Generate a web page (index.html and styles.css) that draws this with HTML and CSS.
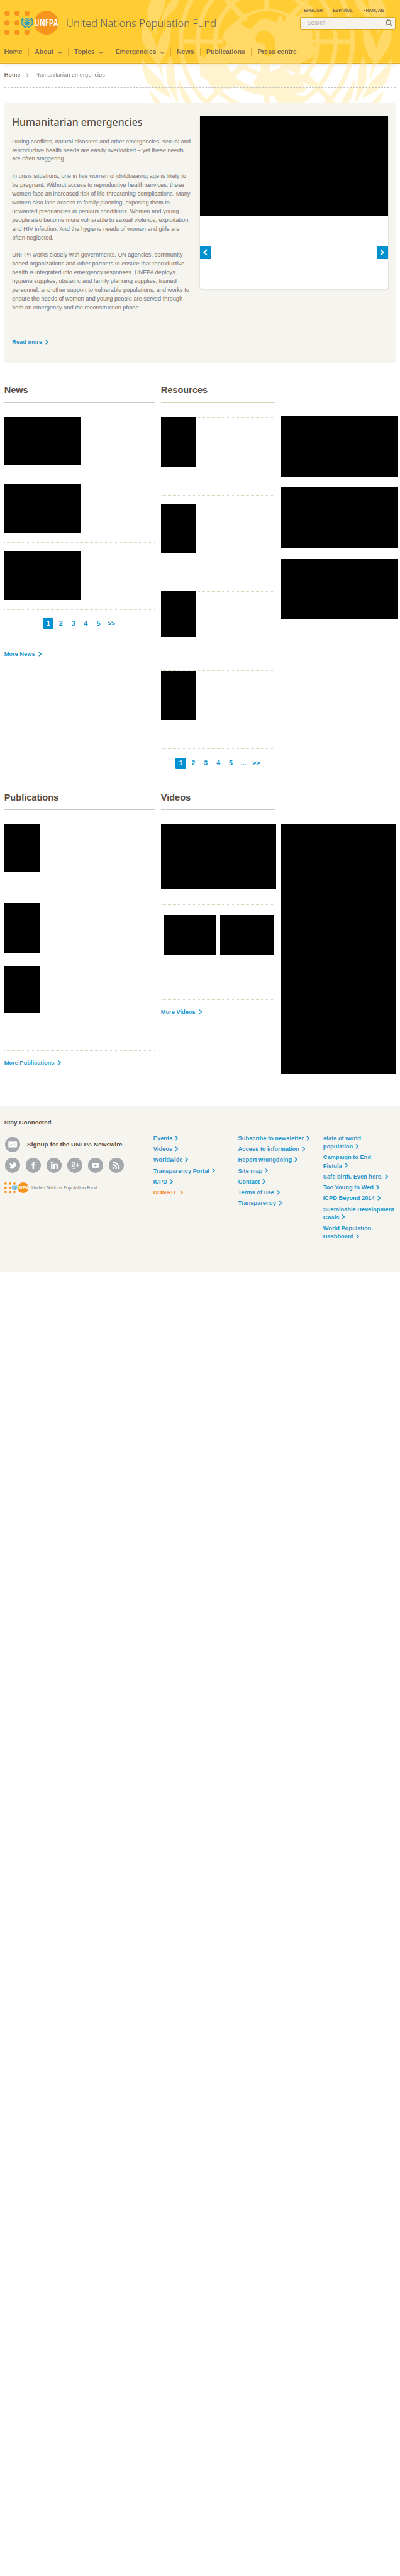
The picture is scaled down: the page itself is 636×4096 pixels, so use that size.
FILE: index.html
```html
<!DOCTYPE html>
<html lang="en">
<head>
<meta charset="utf-8">
<title>Humanitarian emergencies | UNFPA</title>
<link rel="stylesheet" href="styles.css">
</head>
<body>
<svg class="defs" aria-hidden="true">
  <symbol id="chev" viewBox="0 0 8 12"><path d="M1 1l5.500 5L1 11" fill="none" stroke="currentColor" stroke-width="2.200"/></symbol>
  <symbol id="chev-down" viewBox="0 0 10 7"><path d="M1 1l4 4 4-4" fill="none" stroke="currentColor" stroke-width="2"/></symbol>
  <g id="logo-art">
    <g fill="#f7941e">
      <circle cx="6.300" cy="6.300" r="6.400"/><circle cx="30.300" cy="6.300" r="6.400"/><circle cx="54.300" cy="6.300" r="6.400"/>
      <circle cx="6.300" cy="29" r="6.400"/><circle cx="30.300" cy="29" r="6.400"/>
      <circle cx="6.300" cy="51.700" r="6.400"/><circle cx="30.300" cy="51.700" r="6.400"/><circle cx="54.300" cy="51.700" r="6.400"/>
      <circle cx="100.700" cy="29" r="28.800"/>
    </g>
    <g fill="none" stroke="#1b98c9">
      <path d="M45 18q-5 6-3 13q2 7 11 9M64 18q5 6 3 13q-2 7-11 9" stroke-width="3.200" stroke-dasharray="3 .7"/>
      <circle cx="54.500" cy="28" r="10.300" stroke-width="1"/>
      <circle cx="54.500" cy="28" r="6.500" stroke-width="1"/>
      <path d="M44 28h21M54.500 17.500v21M47 20.600l15 15M62 20.600l-15 15" stroke-width=".8"/>
      <path d="M50 24l5 2 4-3M50 31l4-1 1 4M58 27l1 4" stroke-width="3"/>
    </g>
  </g>
  <g id="laurel">
    <path d="M363 0Q349 25 355 50L375 84Q374 70 383 45Q396 20 397 0z"/>
    <path d="M388 44Q393 20 412 0H430Q426 18 412 30Q397 44 390 60z"/>
    <path d="M347 49Q338 70 341 95Q347 120 373 148Q385 165 391 195Q392 160 376 128Q377 100 360 75z"/>
    <path d="M410 52Q388 75 376 115Q373 135 381 152Q400 133 406 105Q411 80 410 52z"/>
    <path d="M340 136Q339 170 353 197Q375 220 412 236Q400 205 372 178Q350 160 340 136z"/>
    <path d="M408 133Q394 165 402 200Q410 225 428 247Q424 220 421 190Q421 160 408 133z"/>
    <path d="M360 216Q361 235 372 247H388Q375 235 360 216z"/>
    <path d="M427 190Q428 225 445 247H461Q452 225 427 190z"/>
  </g>
</svg>

<div class="page">
  <svg class="emblem" viewBox="0 0 960 247" aria-hidden="true">
    <g class="emblem-ink">
      <use href="#laurel"/>
      <use href="#laurel" transform="translate(1280 0) scale(-1 1)"/>
      <path fill-rule="evenodd" d="M428 99.500a212 212 0 1 0 424 0a212 212 0 1 0-424 0zM439 99.500a201 201 0 1 0 402 0a201 201 0 1 0-402 0z"/>
      <path fill-rule="evenodd" d="M469 99.500a171 171 0 1 0 342 0a171 171 0 1 0-342 0zM480 99.500a160 160 0 1 0 320 0a160 160 0 1 0-320 0z"/>
      <path fill-rule="evenodd" d="M511 99.500a129 129 0 1 0 258 0a129 129 0 1 0-258 0zM522 99.500a118 118 0 1 0 236 0a118 118 0 1 0-236 0z"/>
      <path d="M439 94h41v11h-41zM480 94h56v11h-56zM745 94h96v11h-96zM634 0h12v26h-12zM634 220h12v27h-12z"/>
      <path d="M536 0h16l35 35 8 12-8 3-12-8zM744 0h-16l-35 35-8 12 8 3 12-8zM582 152l8 8-58 58-29 29h-16l36-37zM728 182l8-8 57 57 14 16h-18z"/>
      <path fill-rule="evenodd" d="M534 90L540 73 556 60 568 50C600 17 665 10 704 41L720 36 738 8 752 18 744 34 762 45 742 62 752 84 745 98 770 128 755 126 748 140 722 150 720 175 735 188 748 190 752 208 738 205 722 192 735 213 728 222 700 226 740 232 730 247H665L658 230Q600 225 582 204L560 192 566 206 550 214 530 210 500 194 480 182V150L498 128 530 118 545 105zM590 42Q620 22 660 28Q675 31 686 40L684 50 678 52 676 36 668 42 664 54 640 44 624 48 610 60 605 70 590 66 578 56zM614 88Q618 75 634 74L648 78 658 90 660 104 662 122 652 134 636 134 630 122 638 116 636 106 622 104 612 98zM545 152Q552 172 555 174L572 158 590 155Q608 170 625 172V152zM647 154H672V162L650 172zM685 170L700 171 712 178 703 180zM562 176L580 166 610 178 618 182 608 198 614 210Q585 202 562 184z"/>
    </g>
  </svg>

  <header class="header">
    <div class="masthead">
      <div class="brand">
        <svg class="brand-logo" viewBox="0 0 130 58"><use href="#logo-art"/><text x="71.500" y="38" textLength="57.500" lengthAdjust="spacingAndGlyphs" class="logo-mark">UNFPA</text></svg>
        <svg class="brand-name" viewBox="0 0 364 40"><text x="0" y="25" textLength="361">United Nations Population Fund</text></svg>
      </div>
      <div class="tools">
        <div class="langs"><a>ENGLISH</a><a>ESPAÑOL</a><a>FRANÇAIS</a></div>
        <div class="search"><span>Search</span>
          <svg class="search-icon" viewBox="0 0 17 17"><circle cx="7" cy="7" r="5.300" fill="none" stroke="currentColor" stroke-width="2.500"/><path d="M11 11l4.500 4.500" stroke="currentColor" stroke-width="3"/></svg>
        </div>
      </div>
    </div>
    <nav class="nav">
      <a>Home</a>
      <a>About<svg class="down"><use href="#chev-down"/></svg></a>
      <a>Topics<svg class="down"><use href="#chev-down"/></svg></a>
      <a>Emergencies<svg class="down"><use href="#chev-down"/></svg></a>
      <a>News</a>
      <a>Publications</a>
      <a>Press centre</a>
    </nav>
  </header>

  <div class="crumbs"><b>Home</b><svg class="crumb-chev"><use href="#chev"/></svg><span>Humanitarian emergencies</span></div>

  <main class="content">
    <section class="intro">
      <div class="intro-text">
        <h1>Humanitarian emergencies</h1>
        <p>During conflicts, natural disasters and other emergencies, sexual and<br>reproductive health needs are easily overlooked – yet these needs<br>are often staggering.</p>
        <p>In crisis situations, one in five women of childbearing age is likely to<br>be pregnant. Without access to reproductive health services, these<br>women face an increased risk of life-threatening complications. Many<br>women also lose access to family planning, exposing them to<br>unwanted pregnancies in perilous conditions. Women and young<br>people also become more vulnerable to sexual violence, exploitation<br>and HIV infection. And the hygiene needs of women and girls are<br>often neglected.</p>
        <p>UNFPA works closely with governments, UN agencies, community-<br>based organizations and other partners to ensure that reproductive<br>health is integrated into emergency responses. UNFPA deploys<br>hygiene supplies, obstetric and family planning supplies, trained<br>personnel, and other support to vulnerable populations, and works to<br>ensure the needs of women and young people are served through<br>both an emergency and the reconstruction phase.</p>
        <div class="read"><a class="more">Read more<svg><use href="#chev"/></svg></a></div>
      </div>
      <div class="slider">
        <div class="slide-image"></div>
        <div class="slide-controls">
          <button class="arrow prev"><svg><use href="#chev"/></svg></button>
          <button class="arrow"><svg><use href="#chev"/></svg></button>
        </div>
      </div>
    </section>

    <div class="columns top-row">
      <section>
        <h2>News</h2>
        <div class="item news"><div class="thumb"></div></div>
        <div class="item news"><div class="thumb"></div></div>
        <div class="item news"><div class="thumb"></div></div>
        <div class="pager news-pager"><b>1</b><a>2</a><a>3</a><a>4</a><a>5</a><a>&gt;&gt;</a></div>
        <a class="more more-news">More News<svg><use href="#chev"/></svg></a>
      </section>
      <section>
        <h2 class="olive">Resources</h2>
        <div class="item resource"><div class="thumb"></div></div>
        <div class="item resource"><div class="thumb"></div></div>
        <div class="item resource short"><div class="thumb"></div></div>
        <div class="item resource"><div class="thumb"></div></div>
        <div class="pager resource-pager"><b>1</b><a>2</a><a>3</a><a>4</a><a>5</a><a>...</a><a>&gt;&gt;</a></div>
      </section>
      <aside class="banners"><div></div><div></div><div></div></aside>
    </div>

    <div class="columns bottom-row">
      <section>
        <h2>Publications</h2>
        <div class="item pub pub-a"><div class="thumb"></div></div>
        <div class="item pub pub-b"><div class="thumb"></div></div>
        <div class="item pub pub-c"><div class="thumb"></div></div>
        <a class="more more-list">More Publications<svg><use href="#chev"/></svg></a>
      </section>
      <section>
        <h2>Videos</h2>
        <div class="item video"><div class="thumb"></div></div>
        <div class="item video-pair"><div class="thumb"></div><div class="thumb"></div></div>
        <a class="more more-list">More Videos<svg><use href="#chev"/></svg></a>
      </section>
      <aside class="feed"></aside>
    </div>
  </main>

  <footer class="footer">
    <div class="connect">
      <h3>Stay Connected</h3>
      <div class="signup">
        <svg class="round" viewBox="0 0 36 36"><circle cx="18" cy="18" r="18"/><path class="ink" d="M8 11h21v14H8z"/><path class="cut" d="M8.500 11.500l10 8 10-8M8.500 24.500l7-7M28.500 24.500l-7-7"/></svg>
        <span>Signup for the UNFPA Newswire</span>
      </div>
      <div class="social">
        <svg class="round" viewBox="0 0 36 36"><circle cx="18" cy="18" r="18"/><path class="ink" d="M11.500 12.500q3 3.500 7 3.700q-.5-5.200 4-5.200q1.500 0 2.500 1l2.400-.9-1.300 2.100 1.700-.4-1.600 1.800q.2 6.500-5 9.300q-5.500 2.400-10.700-.8q3 .1 4.700-1.400q-2.500-.4-3.200-2.500h1.500q-2.600-1-2.700-3.700l1.500.4q-2-1.700-.8-3.400z"/></svg>
        <svg class="round" viewBox="0 0 36 36"><circle cx="18" cy="18" r="18"/><path class="ink" d="M16 27V18.500h-2.300v-3.400H16v-2.200q0-4 4-4h3v3.600h-2q-1.200 0-1.200 1.100v1.500H23l-.4 3.400h-2.800V27z"/></svg>
        <svg class="round" viewBox="0 0 36 36"><circle cx="18" cy="18" r="18"/><circle class="ink" cx="12.500" cy="11" r="2.100"/><path class="ink" d="M10.700 14.600h3.700V27h-3.700zM16.700 14.600h3.500v1.700q1.200-2 3.600-2q3.600 0 3.600 4.700v8h-3.700v-7.200q0-2.400-1.600-2.400q-1.800 0-1.800 2.400V27h-3.600z"/></svg>
        <svg class="round" viewBox="0 0 36 36"><circle cx="18" cy="18" r="18"/><g class="line"><ellipse cx="14.700" cy="14" rx="3.200" ry="3.400"/><path d="M16.500 10.500h3.500M14 17.300q-2.500 1.600.5 2.700q5 1.300 4 4q-1 2.300-4.200 2.100q-3.600-.4-3.300-2.800q.3-2.300 4-2.600"/></g><path class="line thick" d="M25 14v8M21 18h8"/></svg>
        <svg class="round" viewBox="0 0 36 36"><circle cx="18" cy="18" r="18"/><rect class="ink" x="10" y="12" width="16" height="12" rx="3"/><path d="M16 15v6.200l5.500-3.100z"/></svg>
        <svg class="round" viewBox="0 0 36 36"><circle cx="18" cy="18" r="18"/><circle class="ink" cx="11.500" cy="24.300" r="2.300"/><path class="line rss" d="M9 16.500q9 .4 9.300 9.700M9 11q15 .5 15.700 15.200"/></svg>
      </div>
      <div class="foot-brand">
        <svg class="foot-logo" viewBox="0 0 130 58"><use href="#logo-art"/><text x="71.500" y="38" textLength="57.500" lengthAdjust="spacingAndGlyphs" class="logo-mark">UNFPA</text></svg>
        <svg class="foot-name" viewBox="0 0 160 16"><text x="0" y="12" textLength="158">United Nations Population Fund</text></svg>
      </div>
    </div>
    <ul class="links">
      <li>Events<svg><use href="#chev"/></svg></li>
      <li>Videos<svg><use href="#chev"/></svg></li>
      <li>Worldwide<svg><use href="#chev"/></svg></li>
      <li>Transparency Portal<svg><use href="#chev"/></svg></li>
      <li>ICPD<svg><use href="#chev"/></svg></li>
      <li class="donate">DONATE<svg><use href="#chev"/></svg></li>
    </ul>
    <ul class="links">
      <li>Subscribe to newsletter<svg><use href="#chev"/></svg></li>
      <li>Access to information<svg><use href="#chev"/></svg></li>
      <li>Report wrongdoing<svg><use href="#chev"/></svg></li>
      <li>Site map<svg><use href="#chev"/></svg></li>
      <li>Contact<svg><use href="#chev"/></svg></li>
      <li>Terms of use<svg><use href="#chev"/></svg></li>
      <li>Transparency<svg><use href="#chev"/></svg></li>
    </ul>
    <ul class="links">
      <li>state of world<br>population<svg><use href="#chev"/></svg></li>
      <li>Campaign to End<br>Fistula<svg><use href="#chev"/></svg></li>
      <li>Safe birth. Even here.<svg><use href="#chev"/></svg></li>
      <li>Too Young to Wed<svg><use href="#chev"/></svg></li>
      <li>ICPD Beyond 2014<svg><use href="#chev"/></svg></li>
      <li>Sustainable Development<br>Goals<svg><use href="#chev"/></svg></li>
      <li>World Population<br>Dashboard<svg><use href="#chev"/></svg></li>
    </ul>
  </footer>
</div>
</body>
</html>
```

FILE: styles.css
```css
* { box-sizing: border-box; }

body {
  margin: 0;
  background: #fff;
  font-family: "Liberation Sans", Arial, sans-serif;
  overflow-x: hidden;
}

.defs { position: absolute; width: 0; height: 0; }

.page {
  position: relative;
  width: 960px;
  height: 6179px;
  zoom: 0.6625;
  font-size: 14px;
  line-height: 21px;
  color: #737271;
}

.emblem {
  position: absolute;
  z-index: 1;
  top: 0;
  left: 0;
  width: 960px;
  height: 247px;
}
.emblem-ink { fill: #ffe79d; opacity: 0.48; }

/* Header */
.header {
  height: 152px;
  background: #fc3;
  border-bottom: 2px solid #e0a81c;
  box-shadow: inset 0 -2px #ffd65a, 0 3px 14px -6px rgba(0, 0, 0, 0.25);
}
.masthead, .nav, .crumbs, .content { position: relative; z-index: 2; }
.masthead {
  display: flex;
  justify-content: space-between;
  height: 115px;
  padding: 26px 10px 0;
}
.brand { display: flex; }
.brand-logo { width: 130px; height: 58px; overflow: visible; }
.brand-name { width: 364px; height: 40px; margin: 13px 0 0 18px; }
.brand-name text { font: 300 25px "Noto Sans", sans-serif; fill: #5d6468; }
.logo-mark { font: bold 25px "Open Sans", sans-serif; fill: #fff; }
.tools { width: 230px; }
.langs {
  display: flex;
  gap: 25px;
  height: 15px;
  margin-top: -5px;
  padding-left: 10px;
  font-size: 10px;
  font-weight: bold;
  line-height: 1;
  color: #806b53;
}
.search {
  display: flex;
  align-items: center;
  justify-content: space-between;
  height: 30px;
  margin-top: 5px;
  padding: 0 6px 0 16px;
  background: #f6f3ec;
  border: 1px solid #e0a81c;
  border-radius: 3px;
  color: #aaa9a7;
}
.search-icon { width: 17px; height: 17px; color: #8d8068; }
.nav { display: flex; height: 20px; padding-left: 10px; }
.nav a {
  padding: 0 14px;
  border-right: 1px solid #dfae35;
  font-size: 16px;
  font-weight: bold;
  line-height: 19px;
  letter-spacing: -0.15px;
  color: #7d6950;
}
.nav a:first-child { padding-left: 0; }
.nav a:last-child { border: 0; }
.down { width: 10px; height: 7px; margin-left: 10px; }

.crumbs {
  display: flex;
  align-items: center;
  height: 60px;
  margin: 0 10px 35px;
  border-bottom: 1px dashed #c2c2c2;
  color: #857f79;
}
.crumbs b { color: #7b6a5a; }
.crumb-chev { width: 8px; height: 11px; margin: 0 15px 0 13px; color: #bcb3aa; }

/* Intro panel */
.content { padding-left: 10px; }
.intro {
  display: flex;
  justify-content: space-between;
  width: 940px;
  height: 624px;
  padding: 33px 19px 0;
  background: #f6f4ef;
  border-radius: 3px;
}
.intro-text { width: 433px; }
h1 {
  margin: 0 0 22px;
  font: 500 24px/28px "Noto Sans", sans-serif;
  color: #594d42;
  white-space: nowrap;
}
p { margin: 0 0 21px; white-space: nowrap; }
.read { margin-top: 41px; padding-top: 20px; border-top: 1px dashed #d8d6cf; }
.more { display: block; font-weight: bold; color: #1f94cd; white-space: nowrap; }
.more svg { width: 8px; height: 12px; margin-left: 8px; vertical-align: -1px; }

.slider {
  width: 451px;
  height: 413px;
  background: #fff;
  border-radius: 3px;
  box-shadow: 0 1px 3px rgba(0, 0, 0, 0.25);
}
.slide-image { width: 452px; height: 240px; background: #000; }
.slide-controls { display: flex; justify-content: space-between; margin-top: 70px; }
.arrow {
  display: flex;
  align-items: center;
  justify-content: center;
  width: 27px;
  height: 32px;
  padding: 0;
  border: 0;
  background: #0090cf;
  color: #fff;
}
.arrow svg { width: 11px; height: 16px; }
.prev svg { transform: scaleX(-1); }

/* Listing columns */
.columns { display: grid; grid-template-columns: 362px 275px 281px; column-gap: 14px; }
.top-row { height: 924px; margin-top: 54.500px; }
.bottom-row { height: 748px; margin-top: 54.500px; }
h2 {
  height: 40px;
  margin: 0 0 35px;
  border-bottom: 1px solid #c9c9c9;
  font-size: 22px;
  line-height: 24px;
  color: #594e45;
}
.olive { border-color: #d4d6b8; }
.item { margin-bottom: 20px; border-bottom: 1px dotted #d6d6bd; }
.thumb { background: #000; }
.news { height: 141px; }
.news .thumb { width: 183px; height: 117px; }
.resource { height: 189px; border-top: 1px dotted #d6d6bd; }
.resource .thumb { width: 85px; height: 119px; margin-top: -1px; }
.short { height: 171px; }
.short .thumb { height: 110px; }
.pub .thumb { width: 85px; height: 113px; }
.pub-a { height: 168px; }
.pub-b { height: 131px; }
.pub-b .thumb { height: 121px; }
.pub-c { height: 204px; }
.video { height: 193px; margin-bottom: 25px; }
.video .thumb { width: 276px; height: 155px; }
.video-pair { display: flex; gap: 10px; height: 203px; padding-left: 6px; }
.video-pair .thumb { width: 127px; height: 95px; }

.pager { display: flex; height: 26px; font-size: 16px; line-height: 26px; font-weight: bold; color: #0b90cd; }
.pager > * { width: 30px; text-align: center; }
.pager b { width: 26px; margin-right: 2px; border-radius: 2px; background: #0090cf; color: #fff; }
.pager a:last-child { width: 32px; }
.news-pager { padding-left: 93px; }
.resource-pager { padding-left: 35px; }
.more-news { margin-top: 52px; }
.more-list { margin-top: 19px; }

.banners { padding-top: 74px; }
.banners div { height: 144px; margin-bottom: 27px; background: #000; }
.feed { width: 276px; height: 600px; margin-top: 74px; background: #000; }

/* Footer */
.footer {
  display: grid;
  grid-template-columns: 358px 203.500px 204px 184px;
  height: 400px;
  margin-top: 1px;
  padding-left: 10px;
  background: #f6f4ef;
  border-top: 2px solid #dfdacb;
}
h3 { height: 46px; margin: 28px 0 0; font-size: 15px; line-height: 24px; color: #594e45; }
.signup { display: flex; align-items: center; gap: 17px; padding-left: 2px; height: 36px; font-size: 15px; font-weight: bold; color: #594e45; }
.social { display: flex; gap: 14px; margin-top: 14px; padding-left: 2px; }
.round { width: 36px; height: 36px; fill: #a5a8ac; overflow: visible; filter: drop-shadow(0 1px 1px rgba(0, 0, 0, 0.25)); }
.ink { fill: #fff; }
.cut { fill: none; stroke: #a5a8ac; stroke-width: 1; }
.line { fill: none; stroke: #fff; stroke-width: 1.700; }
.thick { stroke-width: 2; }
.rss { stroke-width: 3.200; }
.foot-brand { display: flex; margin-top: 23px; }
.foot-logo { width: 58px; height: 26px; overflow: visible; }
.foot-name { width: 160px; height: 16px; margin: 5px 0 0 8px; }
.foot-name text { font: 11px "Noto Sans", sans-serif; fill: #72777b; }
.links { margin: 68.500px 0 0; padding: 0; list-style: none; font-weight: bold; line-height: 20px; color: #1f94cd; white-space: nowrap; }
.links li { margin-bottom: 6px; }
.links svg { width: 8px; height: 12px; margin-left: 6px; vertical-align: -1px; }
.links .donate { color: #f58a1f; }
```
